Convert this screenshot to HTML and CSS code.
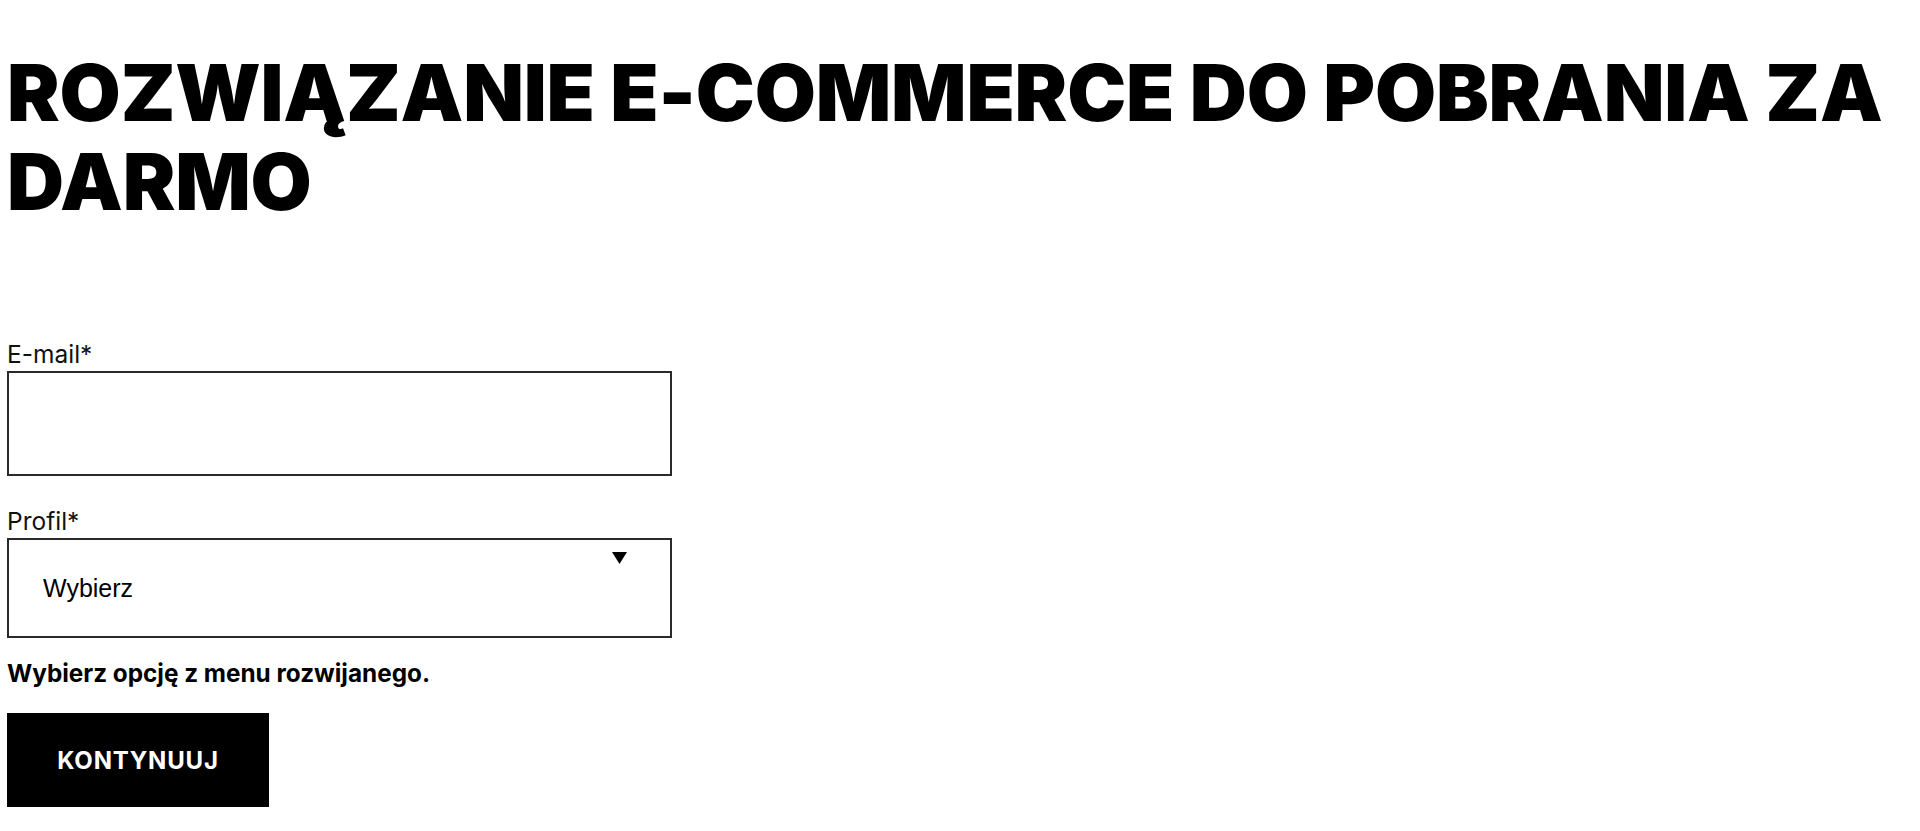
FILE: index.html
```html
<!DOCTYPE html>
<html lang="pl">
<head>
<meta charset="utf-8">
<title>Rozwiązanie e-commerce do pobrania za darmo</title>
<link rel="stylesheet" href="styles.css">
</head>
<body>
<main class="page">
  <h1 class="title">ROZWIĄZANIE E-COMMERCE DO POBRANIA ZA DARMO</h1>
  <form class="form">
    <div class="field">
      <label class="label" for="email">E-mail*</label>
      <input class="input" id="email" type="email">
    </div>
    <div class="field field-select">
      <label class="label" for="profil">Profil*</label>
      <div class="select-wrap">
        <select class="select" id="profil">
          <option>Wybierz</option>
        </select>
        <svg class="caret" width="15" height="12" viewBox="0 0 15 12"><polygon points="0,0 15,0 7.5,12" fill="#000"/></svg>
      </div>
    </div>
    <p class="error">Wybierz opcję z menu rozwijanego.</p>
    <button class="button" type="button">KONTYNUUJ</button>
  </form>
</main>
</body>
</html>
```
FILE: styles.css
```css
html, body {
  margin: 0;
  padding: 0;
  background: #fff;
  color: #000;
}

.page {
  padding: 48px 7px 0 7px;
}

.title {
  margin: 0;
  font-family: "Inter", "Lato", sans-serif;
  font-weight: 900;
  font-size: 79px;
  line-height: 89px;
  letter-spacing: -0.2px;
  color: #000;
}

.form {
  display: flex;
  flex-direction: column;
  width: 665px;
  margin-top: 114px;
}

.field {
  display: flex;
  flex-direction: column;
  gap: 3px;
}

.field-select {
  margin-top: 31px;
}

.label {
  font-family: "Inter", "Noto Sans", sans-serif;
  font-size: 24.5px;
  line-height: 28px;
  color: #111;
}

.input {
  box-sizing: border-box;
  width: 665px;
  height: 105px;
  margin: 0;
  border: 2px solid #2a2a2a;
  border-radius: 0;
  background: #fff;
  outline: none;
}

.select-wrap {
  position: relative;
  width: 665px;
  height: 100px;
}

.select {
  box-sizing: border-box;
  width: 100%;
  height: 100%;
  margin: 0;
  padding: 0 0 0 34px;
  border: 2px solid #2a2a2a;
  border-radius: 0;
  background: #fff;
  appearance: none;
  -webkit-appearance: none;
  font-family: "Liberation Sans", Arial, sans-serif;
  font-size: 25px;
  color: #000;
  outline: none;
}

.caret {
  position: absolute;
  top: 14px;
  right: 45px;
  display: block;
}

.error {
  margin: 20px 0 0 0;
  font-family: "Inter", "Noto Sans", sans-serif;
  font-weight: 700;
  font-size: 24.3px;
  line-height: 30px;
  color: #000;
}

.button {
  align-self: flex-start;
  width: 262px;
  height: 94px;
  margin-top: 25px;
  border: none;
  border-radius: 0;
  background: #000;
  color: #fff;
  font-family: "Inter", "Noto Sans", sans-serif;
  font-weight: 700;
  font-size: 24px;
  letter-spacing: 0.8px;
  padding: 0;
}
```
